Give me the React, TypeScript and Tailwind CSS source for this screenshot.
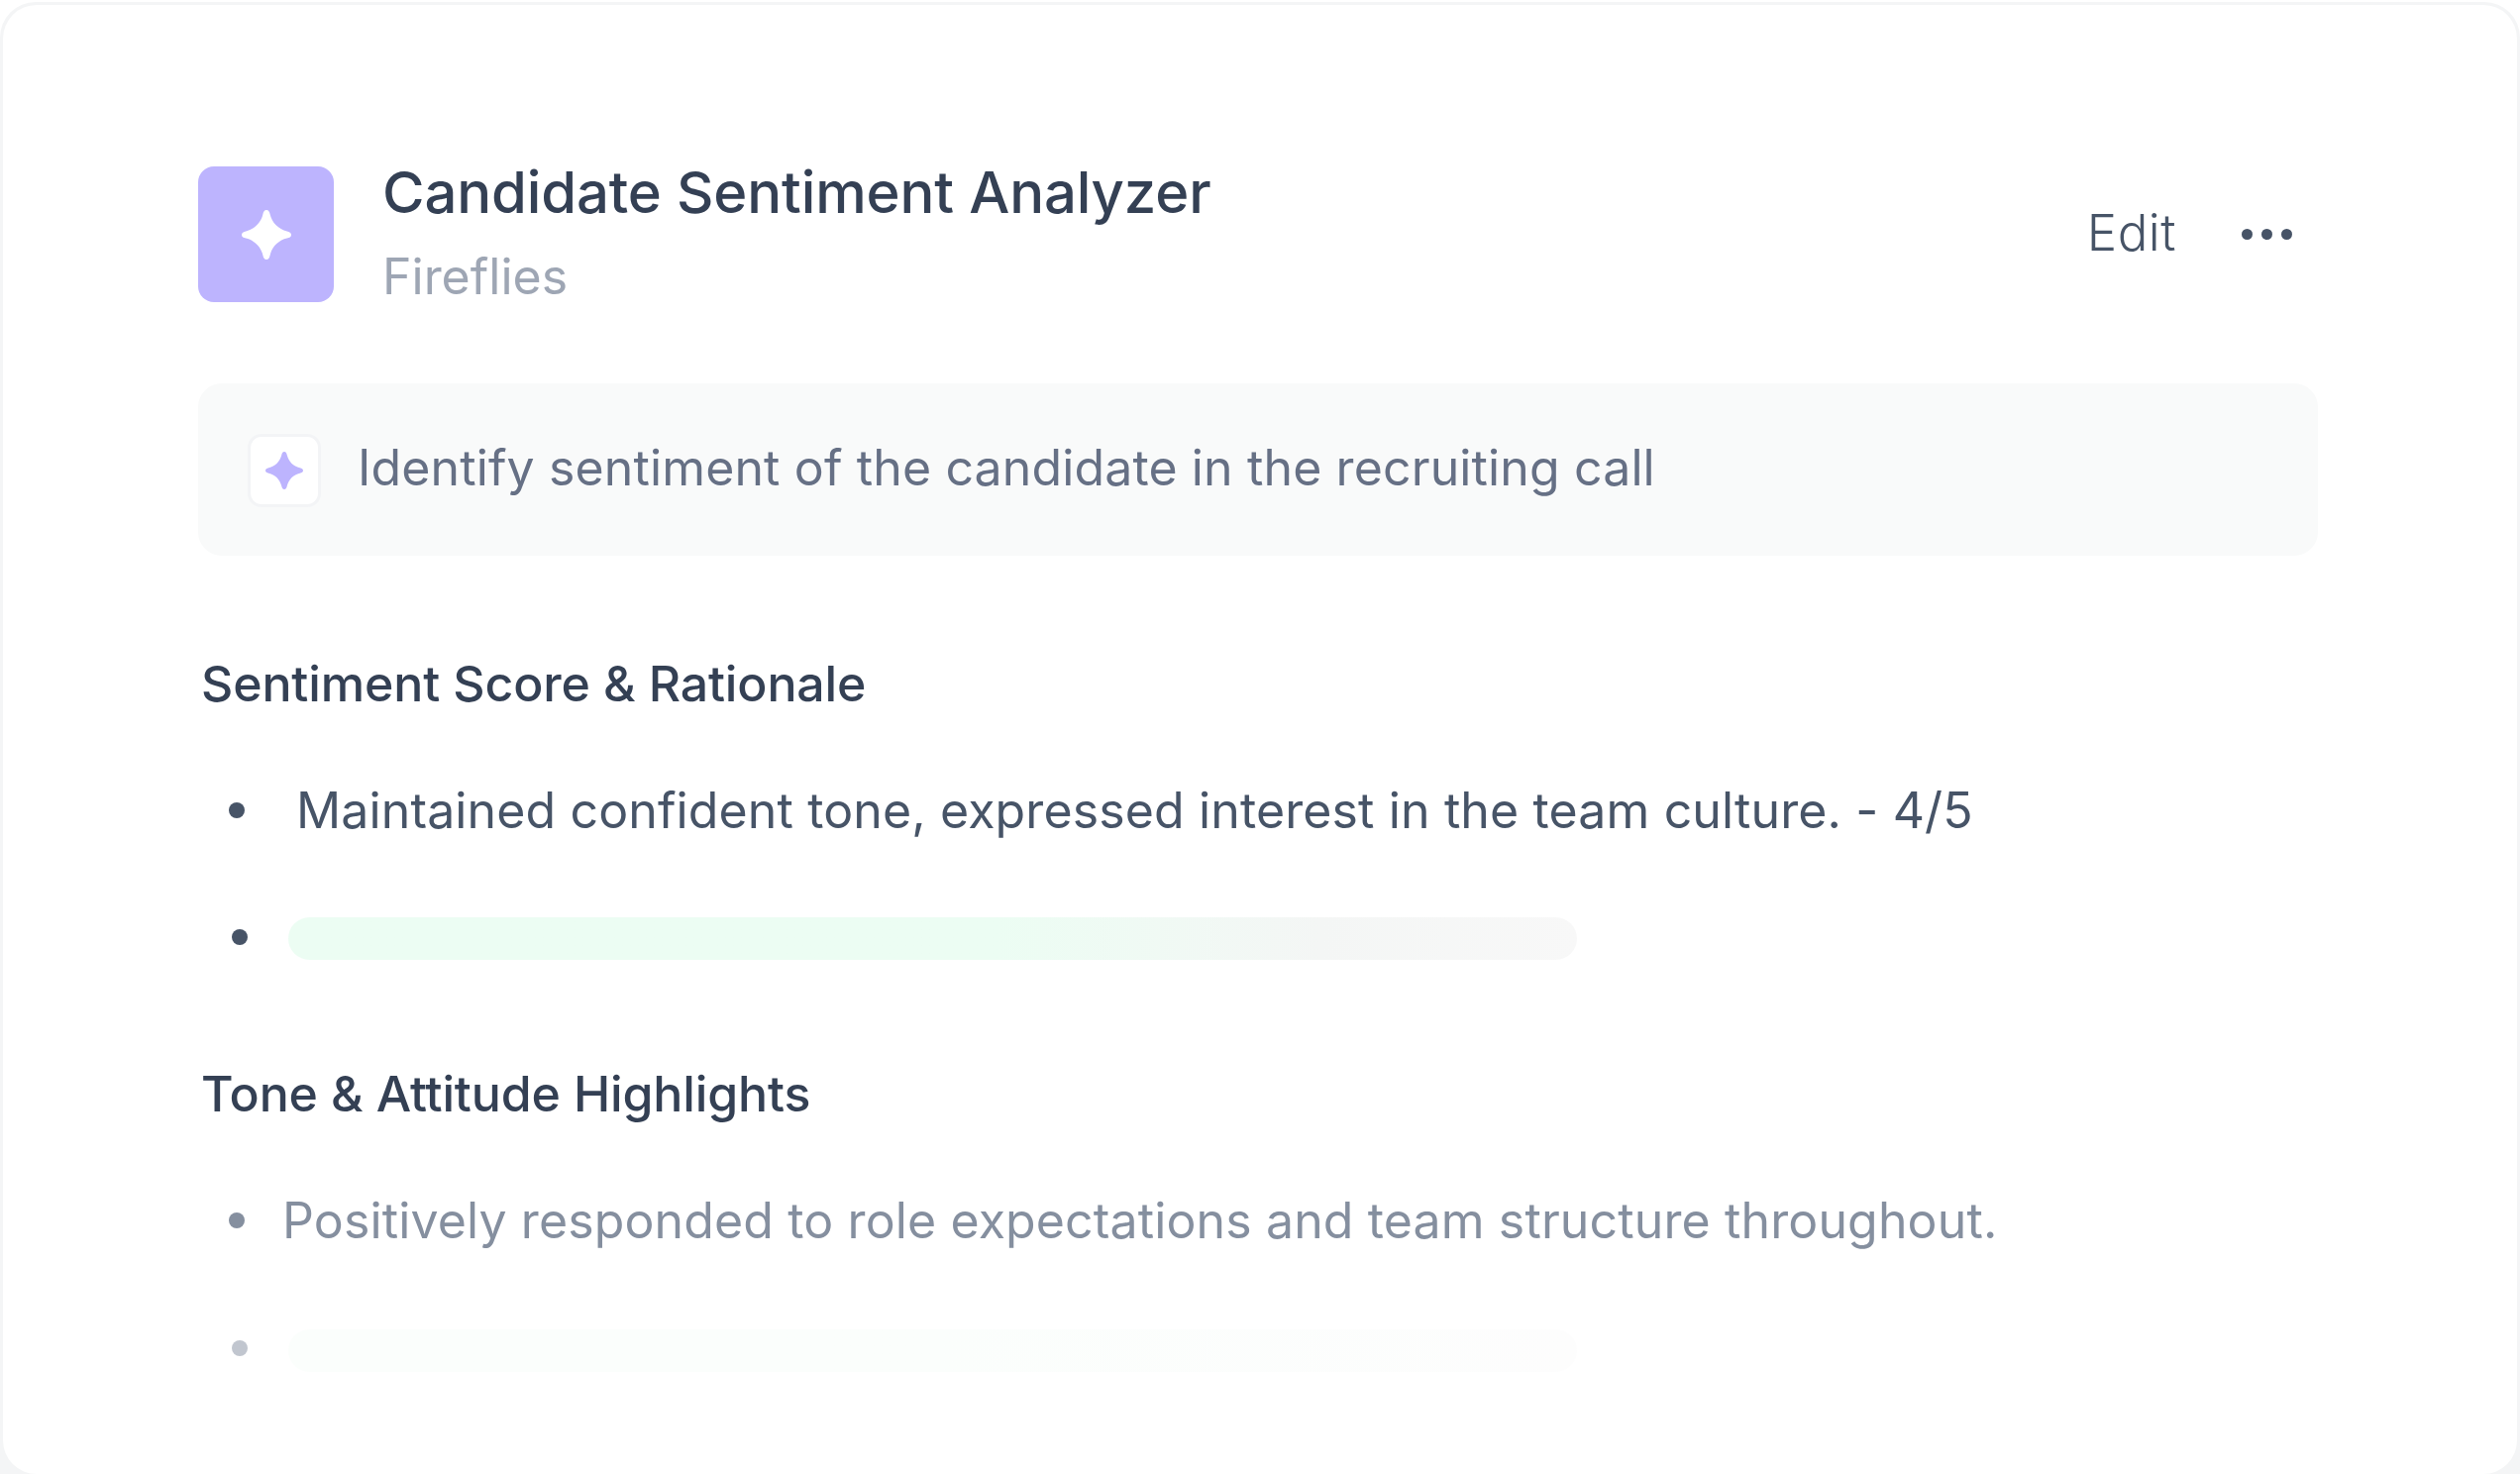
const rowText = "text-[50px] leading-[60px] tracking-[0.13px]";
const headingText = "text-[50px] font-medium leading-[60px] tracking-[-0.13px] text-[#344054]";

function Sparkle({ className }: { className: string }) {
  return (
    <svg viewBox="0 0 50 50" className={className} fill="currentColor" aria-hidden>
      <path d="M25 0c2.2 0 3 1.800 3.600 4.300C30.500 12.800 37.200 19.500 45.700 21.400C48.200 22 50 22.800 50 25s-1.800 3-4.300 3.600C37.200 30.500 30.500 37.200 28.600 45.700C28 48.200 27.200 50 25 50s-3-1.800-3.600-4.300C19.500 37.200 12.800 30.500 4.300 28.600C1.800 28 0 27.200 0 25s1.800-3 4.300-3.600C12.800 19.500 19.500 12.800 21.400 4.300C22 1.800 22.800 0 25 0z" />
    </svg>
  );
}

function Bullet({ className }: { className: string }) {
  return <span className={`block h-[16px] w-[16px] shrink-0 rounded-full ${className}`} />;
}

export default function App() {
  return (
    <div className="h-[1488px] w-[2544px] overflow-hidden bg-white pt-[2px] font-['Inter',sans-serif]">
      {/* card frame: stays square at the bottom so the corners show grey */}
      <div className="h-[1486px] rounded-t-[36px] bg-[#f4f5f6] px-[3px] pt-[3px]">
        <div className="h-[1483px] rounded-[34px] bg-white pl-[197px] pr-[201px] pt-[163px]">
          {/* Header */}
          <div className="flex h-[137px] items-center">
            <div className="flex h-[137px] w-[137px] shrink-0 items-center justify-center rounded-[16px] bg-[#bdb4fe] text-white">
              <Sparkle className="h-[50px] w-[50px]" />
            </div>
            <div className="ml-[49px] min-w-0 flex-1 pb-[5px]">
              <h1 className="text-[58px] font-medium leading-[70px] tracking-[-0.13px] text-[#344054]">Candidate Sentiment Analyzer</h1>
              <p className="mt-[20px] text-[50px] leading-[60px] text-[#9ea6b4]">Fireflies</p>
            </div>
            <span className="mb-[3px] text-[51px] font-light leading-[60px] tracking-[0.5px] text-[#475467]">Edit</span>
            <div className="ml-[66px] mr-[26px] flex items-center gap-[9px] text-[#475467]">
              <span className="block h-[11px] w-[11px] rounded-full bg-current" />
              <span className="block h-[11px] w-[11px] rounded-full bg-current" />
              <span className="block h-[11px] w-[11px] rounded-full bg-current" />
            </div>
          </div>

          {/* Prompt */}
          <div className="mt-[82px] flex h-[174px] items-center rounded-[24px] bg-[#f9fafa] pl-[50px]">
            <div className="mt-[1px] flex h-[74px] w-[74px] shrink-0 items-center justify-center rounded-[14px] border-[3px] border-[#f3f4f6] bg-white text-[#bdb4fe]">
              <Sparkle className="h-[38px] w-[38px]" />
            </div>
            <p className={`mb-[4px] ml-[37px] ${rowText} text-[#667085]`}>Identify sentiment of the candidate in the recruiting call</p>
          </div>

          {/* Sentiment */}
          <h2 className={`ml-[3px] mt-[99px] ${headingText}`}>Sentiment Score &amp; Rationale</h2>
          <div className="mt-[68px] flex items-center pl-[31px]">
            <Bullet className="bg-[#475467]" />
            <p className={`ml-[52px] ${rowText} text-[#475467]`}>Maintained confident tone, expressed interest in the team culture. - 4/5</p>
          </div>
          <div className="mt-[78px] flex items-center pl-[34px]">
            <Bullet className="mb-[3px] bg-[#475467]" />
            <div className="ml-[41px] h-[43px] w-[1301px] rounded-full bg-gradient-to-r from-[#ecfdf3] from-55% via-[#f4f6f5] via-80% to-[#f8f8f8]" />
          </div>

          {/* Tone */}
          <h2 className={`ml-[3px] mt-[105px] ${headingText}`}>Tone &amp; Attitude Highlights</h2>
          <div className="mt-[68px] flex items-center pl-[31px]">
            <Bullet className="bg-[#858f9f]" />
            <p className={`ml-[38px] ${rowText} text-[#858f9f]`}>Positively responded to role expectations and team structure throughout.</p>
          </div>
          <div className="mt-[80px] flex items-center pl-[34px]">
            <Bullet className="mb-[6px] bg-[#c1c6cf]" />
            <div className="ml-[41px] h-[43px] w-[1301px] rounded-full bg-gradient-to-r from-[#fbfefc] from-50% to-[#fdfdfd]" />
          </div>
        </div>
      </div>
    </div>
  );
}
